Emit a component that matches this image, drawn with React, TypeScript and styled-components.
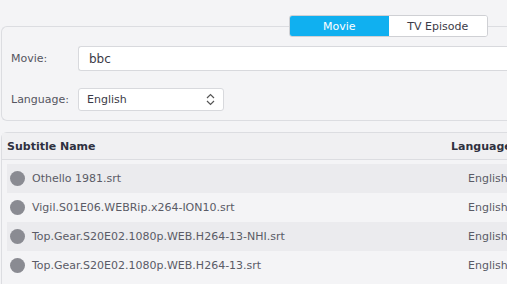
import styled, { createGlobalStyle } from "styled-components";

const GlobalStyle = createGlobalStyle`
    html, body {
        margin: 0;
        padding: 0;
        background: #f4f4f6;
        font-family: "DejaVu Sans", Verdana, sans-serif;
        overflow: hidden;
    }
`

type Subtitle = {
    name: string
    language: string
}

const subtitles: Subtitle[] = [
    {name: 'Othello 1981.srt', language: 'English'},
    {name: 'Vigil.S01E06.WEBRip.x264-ION10.srt', language: 'English'},
    {name: 'Top.Gear.S20E02.1080p.WEB.H264-13-NHI.srt', language: 'English'},
    {name: 'Top.Gear.S20E02.1080p.WEB.H264-13.srt', language: 'English'},
]

const App = () => {
    return (
        <Page>
            <GlobalStyle/>
            <SearchArea>
                <Tabs>
                    <Tab active>Movie</Tab>
                    <Tab>TV Episode</Tab>
                </Tabs>
                <SearchPanel>
                    <FieldRow>
                        <Label>Movie:</Label>
                        <TextInput defaultValue="bbc"/>
                    </FieldRow>
                    <FieldRow>
                        <Label>Language:</Label>
                        <Select>
                            <span>English</span>
                            <svg width="9" height="13" viewBox="0 0 9 13" fill="none" stroke="#555" strokeWidth="1.2">
                                <path d="M1 5 L4.5 1.5 L8 5"/>
                                <path d="M1 8 L4.5 11.5 L8 8"/>
                            </svg>
                        </Select>
                    </FieldRow>
                </SearchPanel>
            </SearchArea>
            <Table>
                <HeaderRow>
                    <HeadCell>Subtitle Name</HeadCell>
                    <HeadCell width={56}>Language</HeadCell>
                </HeaderRow>
                <Rows>
                    {subtitles.map((s, i) => (
                        <Row key={s.name} striped={i % 2 === 0}>
                            <NameCell>
                                <Dot/>
                                {s.name}
                            </NameCell>
                            <LangCell>{s.language}</LangCell>
                        </Row>
                    ))}
                </Rows>
            </Table>
        </Page>
    );
};

export default App;

const Page = styled.div`
    width: 507px;
    height: 284px;
    padding-top: 15px;
    box-sizing: border-box;
    overflow: hidden;
`

const SearchArea = styled.div`
    position: relative;
    padding: 11px 0 0 1px;
`

const Tabs = styled.div`
    position: absolute;
    top: 0;
    left: 289px;
    display: flex;
    width: 199px;
    height: 22px;
    border: 1px solid #cfd0d4;
    border-radius: 3px;
    overflow: hidden;
    background: #fff;
    box-sizing: border-box;
    z-index: 1;
`

const Tab = styled.div<{ active?: boolean }>`
    flex: 1;
    display: flex;
    align-items: center;
    justify-content: center;
    font-size: 11px;
    color: ${p => p.active ? '#ffffff' : '#3b3b47'};
    background: ${p => p.active ? '#10b0f0' : '#ffffff'};
`

const SearchPanel = styled.div`
    height: 95px;
    border: 1px solid #dcdde1;
    border-right: none;
    border-radius: 6px 0 0 6px;
    box-sizing: border-box;
    padding: 19px 0 0 9px;
    display: flex;
    flex-direction: column;
    gap: 17px;
`

const FieldRow = styled.div`
    display: flex;
    align-items: center;
`

const Label = styled.div`
    width: 67px;
    font-size: 11px;
    color: #555560;
`

const TextInput = styled.input`
    flex: 1;
    height: 25px;
    box-sizing: border-box;
    border: 1px solid #d8d9dd;
    border-right: none;
    border-radius: 3px 0 0 3px;
    padding: 0 10px;
    font-family: "DejaVu Sans", Verdana, sans-serif;
    font-size: 12px;
    color: #3b3b47;
    outline: none;
`

const Select = styled.div`
    width: 146px;
    height: 23px;
    box-sizing: border-box;
    border: 1px solid #d8d9dd;
    border-radius: 3px;
    background: #fff;
    display: flex;
    align-items: center;
    justify-content: space-between;
    padding: 0 8px;
    font-size: 11px;
    color: #3b3b47;
`

const Table = styled.div`
    margin: 11px 0 0 1px;
    border: 1px solid #dcdde1;
    border-right: none;
    border-radius: 6px 0 0 0;
    height: 160px;
    box-sizing: border-box;
`

const HeaderRow = styled.div`
    display: flex;
    justify-content: space-between;
    height: 26px;
    align-items: center;
    padding: 0 0 0 5px;
    border-bottom: 1px solid #dcdde1;
    background: #f0f0f2;
`

const HeadCell = styled.div<{ width?: number }>`
    font-size: 11px;
    font-weight: bold;
    color: #2f3140;
    white-space: nowrap;
    ${p => p.width ? `width: ${p.width}px;` : ''}
`

const Rows = styled.div`
    padding: 4px 0 0 5px;
`

const Row = styled.div<{ striped: boolean }>`
    display: flex;
    justify-content: space-between;
    align-items: center;
    height: 29px;
    background: ${p => p.striped ? '#ebebee' : '#f4f4f6'};
`

const NameCell = styled.div`
    display: flex;
    align-items: center;
    gap: 7px;
    padding-left: 3px;
    font-size: 11px;
    color: #5a5b66;
`

const Dot = styled.span`
    width: 15px;
    height: 15px;
    border-radius: 50%;
    background: #8a8b92;
`

const LangCell = styled.div`
    font-size: 11px;
    color: #5a5b66;
    width: 39px;
    white-space: nowrap;
`
